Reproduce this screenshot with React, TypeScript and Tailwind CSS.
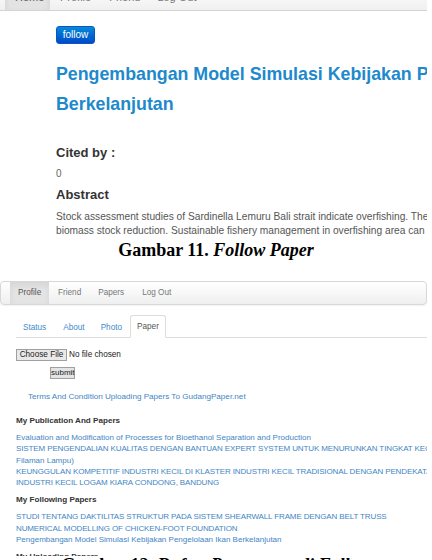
import React from "react";

const sans = { fontFamily: '"Liberation Sans", Arial, sans-serif' };

const publications = [
  ["Evaluation and Modification of Processes for Bioethanol Separation and Production"],
  [
    "SISTEM PENGENDALIAN KUALITAS DENGAN BANTUAN EXPERT SYSTEM UNTUK MENURUNKAN TINGKAT KECACATAN PRODUK (Studi Kasus",
    "Filaman Lampu)",
  ],
  [
    "KEUNGGULAN KOMPETITIF INDUSTRI KECIL DI KLASTER INDUSTRI KECIL TRADISIONAL DENGAN PENDEKATAN KLASTER",
    "INDUSTRI KECIL LOGAM KIARA CONDONG, BANDUNG",
  ],
];

const following = [
  "STUDI TENTANG DAKTILITAS STRUKTUR PADA SISTEM SHEARWALL FRAME DENGAN BELT TRUSS",
  "NUMERICAL MODELLING OF CHICKEN-FOOT FOUNDATION",
  "Pengembangan Model Simulasi Kebijakan Pengelolaan Ikan Berkelanjutan",
];

// all-caps titles sit a little tighter
const isCaps = (t: string) => t.slice(0, 10) === t.slice(0, 10).toUpperCase();

function Caption({ num, children }: { num: string; children: React.ReactNode }) {
  return (
    <p
      className="w-[432px] text-center text-[18px] font-bold leading-[18px] text-black"
      style={{ fontFamily: '"Liberation Serif", "Times New Roman", serif' }}
    >
      Gambar {num}. <i>{children}</i>
    </p>
  );
}

function PaperDetail() {
  return (
    <div className="w-[427px] overflow-hidden" style={sans}>
      <div className="mt-[-16px] flex h-[27px] items-stretch border-b border-[#d4d4d4] bg-gradient-to-b from-white to-[#f0f0f0] text-[11px] leading-[27px] text-[#777]">
        <span className="ml-[5px] w-[45px] bg-[#e3e3e3] pl-[10px] text-[#555] shadow-[inset_0_3px_6px_rgba(0,0,0,0.08)]">Home</span>
        <span className="ml-[10px]">Profile</span>
        <span className="ml-[18px]">Friend</span>
        <span className="ml-[17px]">Log Out</span>
      </div>
      <div className="pl-[56px]">
        <button className="mt-[15px] h-[18px] w-[39px] rounded-[3px] border border-[#0a55c0] bg-gradient-to-b from-[#0a8ad8] to-[#0448c8] text-[10px] leading-[16px] text-white">
          follow
        </button>
        <h1 className="mt-[14px] w-[600px] text-[17.8px] font-bold leading-[30px] text-[#2089cc]">
          Pengembangan Model Simulasi Kebijakan Pengelolaan Ikan
          <br />
          Berkelanjutan
        </h1>
        <h3 className="mt-[25px] text-[13px] font-bold leading-[18px] text-[#333]">Cited by :</h3>
        <p className="mt-[5px] text-[10px] leading-[14px] text-[#666]">0</p>
        <h3 className="mt-[5px] text-[13px] font-bold leading-[18px] text-[#333]">Abstract</h3>
        <p className="mt-[6px] whitespace-nowrap text-[10.2px] leading-[14px] text-[#555]">
          Stock assessment studies of Sardinella Lemuru Bali strait indicate overfishing. The overfishing caused
          <br />
          biomass stock reduction. Sustainable fishery management in overfishing area can be done by
        </p>
      </div>
    </div>
  );
}

function PaperLine({ text }: { text: string }) {
  return <div className={isCaps(text) ? "tracking-[-0.12px]" : ""}>{text}</div>;
}

function ProfilePapers() {
  return (
    <div className="h-[275px] w-[427px] overflow-hidden" style={sans}>
      <div className="flex h-[24px] items-stretch rounded-[4px] border border-[#d8d8d8] bg-gradient-to-b from-white to-[#efefef] text-[8.2px] leading-[22px] text-[#777] shadow-[0_1px_2px_rgba(0,0,0,0.06)]">
        <span className="ml-[9px] w-[39px] bg-[#e4e4e4] pl-[8px] text-[#555] shadow-[inset_0_3px_6px_rgba(0,0,0,0.07)]">Profile</span>
        <span className="ml-[9px]">Friend</span>
        <span className="ml-[17px]">Papers</span>
        <span className="ml-[18px]">Log Out</span>
      </div>

      <div className="ml-[16px] mt-[11px] flex h-[22px] items-end border-b border-[#ddd] text-[8.2px] text-[#428bca]">
        <span className="mb-[-1px] pl-[7px] pr-[8px] leading-[21px]">Status</span>
        <span className="mb-[-1px] pl-[9px] pr-[8px] leading-[21px]">About</span>
        <span className="mb-[-1px] pl-[8px] pr-[8px] leading-[21px]">Photo</span>
        <span className="mb-[-1px] rounded-t-[3px] border border-b-white border-[#ddd] bg-white px-[6px] leading-[21px] text-[#555]">
          Paper
        </span>
      </div>

      <div className="ml-[16px] mt-[11px] flex items-center whitespace-nowrap text-[8.2px] text-[#222]">
        <span className="h-[12px] w-[51px] border border-[#a0a0a0] bg-[#e9e9e9] text-center leading-[10px]">Choose File</span>
        <span className="ml-[2px] leading-[12px]">No file chosen</span>
      </div>
      <div className="ml-[50px] mt-[6px] h-[12px] w-[25px] border border-[#a0a0a0] bg-[#e4e4e4] text-center text-[8px] leading-[10px] text-[#222]">
        submit
      </div>

      <p className="ml-[28px] mt-[12px] text-[8.1px] leading-[12px] text-[#3f86c4]">
        Terms And Condition Uploading Papers To GudangPaper.net
      </p>

      <div className="pl-[16px]">
        <h4 className="mt-[12px] text-[8.1px] font-bold leading-[11px] text-[#333]">My Publication And Papers</h4>
        <div className="mt-[6px] whitespace-nowrap text-[8px] leading-[11.25px] text-[#3f86c4]">
          {publications.map((lines) => (
            <div key={lines[0]}>
              {lines.map((line) => (
                <PaperLine key={line} text={line} />
              ))}
            </div>
          ))}
        </div>
        <h4 className="mt-[6px] text-[8.1px] font-bold leading-[11px] text-[#333]">My Following Papers</h4>
        <div className="mt-[6px] whitespace-nowrap text-[8px] leading-[11.25px] text-[#3f86c4]">
          {following.map((t) => (
            <PaperLine key={t} text={t} />
          ))}
        </div>
        <h4 className="mt-[6px] text-[8.1px] font-bold leading-[11px] text-[#333]">My Uploading Papers</h4>
      </div>
    </div>
  );
}

export default function App() {
  return (
    <div className="h-[560px] w-[432px] overflow-hidden bg-white">
      <PaperDetail />
      <div className="mt-[3px]">
        <Caption num="11">Follow Paper</Caption>
      </div>
      <div className="mt-[22px]">
        <ProfilePapers />
      </div>
      <Caption num="12">Daftar Paper yang di Follow</Caption>
    </div>
  );
}
